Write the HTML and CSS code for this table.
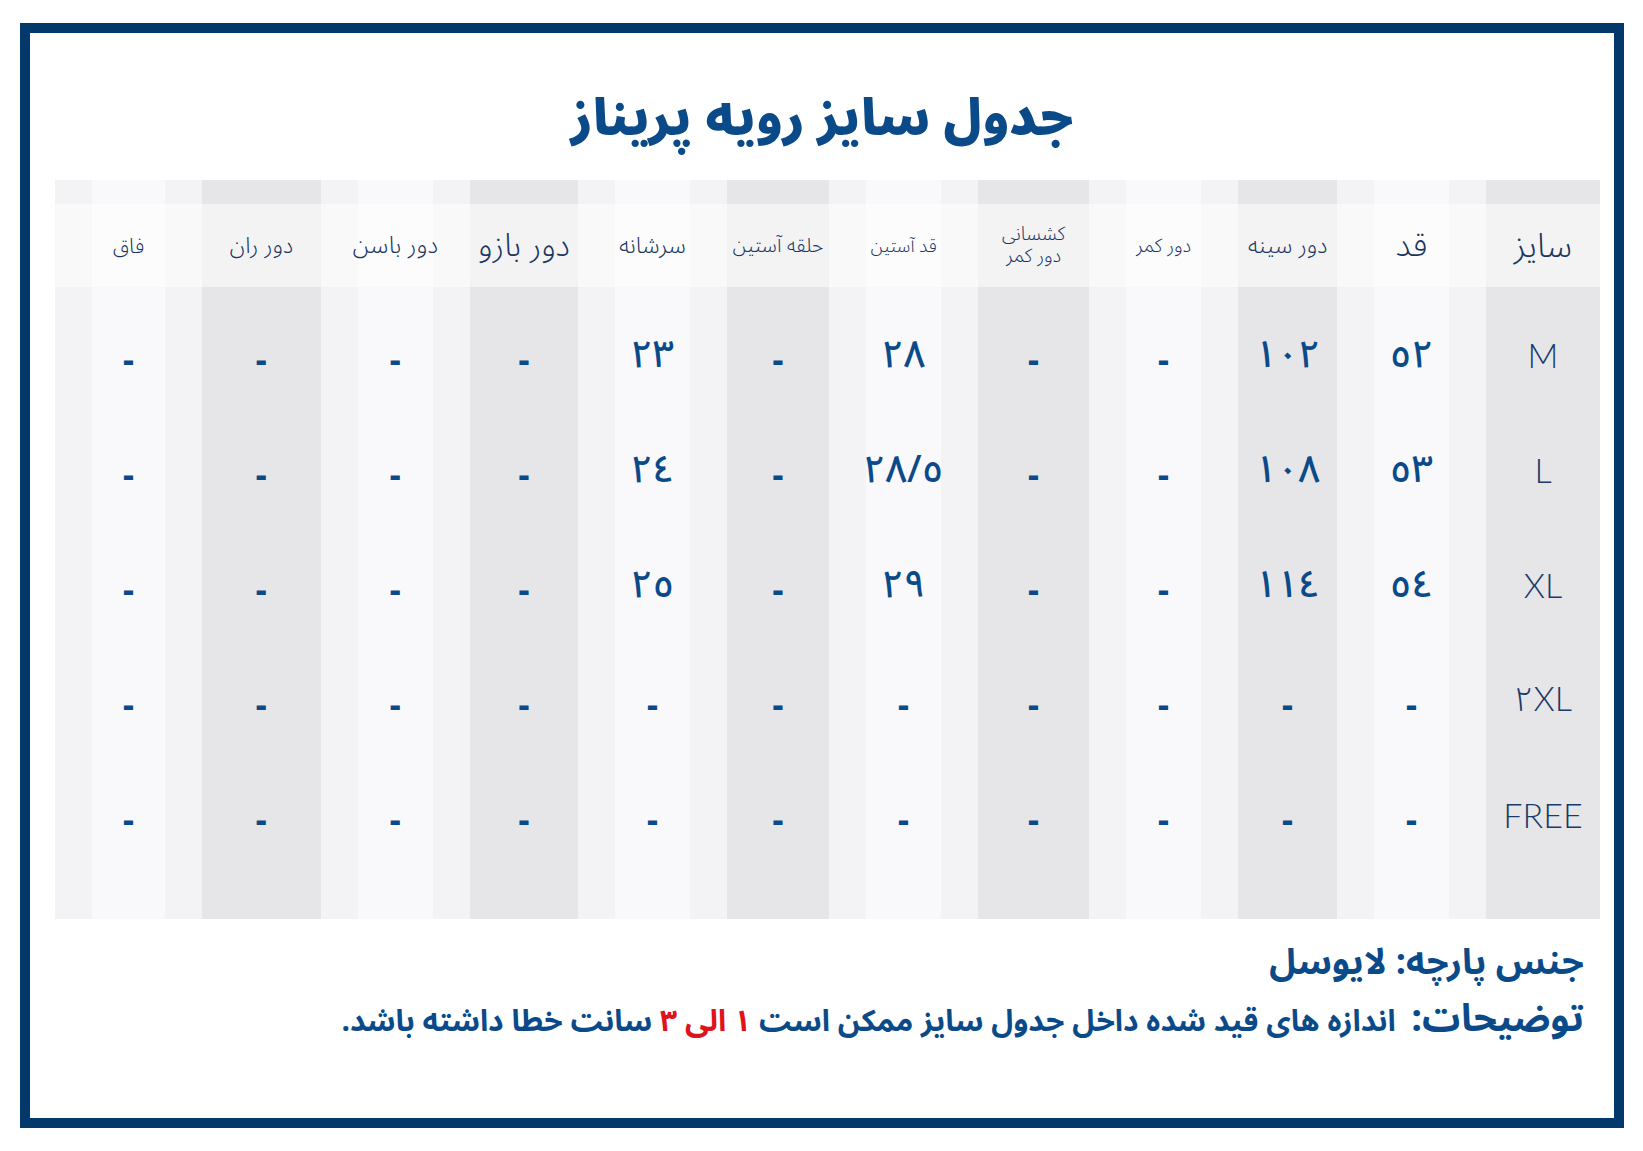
FILE: index.html
```html
<!DOCTYPE html>
<html lang="fa">
<head>
<meta charset="utf-8">
<title>جدول سایز رویه پریناز</title>
<link rel="stylesheet" href="styles.css">
</head>
<body>
<div class="frame" dir="rtl">
  <h1 class="title">جدول سایز رویه پریناز</h1>
  <div class="chart">
    <div class="col dark">
      <div class="hd fs-size">سایز</div>
      <div class="cell lat">M</div><div class="cell lat">L</div><div class="cell lat">XL</div><div class="cell lat">٢XL</div><div class="cell lat">FREE</div>
    </div>
    <div class="col light">
      <div class="hd fs-qad">قد</div>
      <div class="cell">٥٢</div><div class="cell">٥٣</div><div class="cell">٥٤</div><div class="cell d">-</div><div class="cell d">-</div>
    </div>
    <div class="col dark">
      <div class="hd fs23">دور سینه</div>
      <div class="cell">١٠٢</div><div class="cell">١٠٨</div><div class="cell">١١٤</div><div class="cell d">-</div><div class="cell d">-</div>
    </div>
    <div class="col light">
      <div class="hd fs19">دور کمر</div>
      <div class="cell d">-</div><div class="cell d">-</div><div class="cell d">-</div><div class="cell d">-</div><div class="cell d">-</div>
    </div>
    <div class="col dark">
      <div class="hd fs19 two">کشسانی<br>دور کمر</div>
      <div class="cell d">-</div><div class="cell d">-</div><div class="cell d">-</div><div class="cell d">-</div><div class="cell d">-</div>
    </div>
    <div class="col light">
      <div class="hd fs18">قد آستین</div>
      <div class="cell">٢٨</div><div class="cell">٢٨/٥</div><div class="cell">٢٩</div><div class="cell d">-</div><div class="cell d">-</div>
    </div>
    <div class="col dark">
      <div class="hd fs20">حلقه آستین</div>
      <div class="cell d">-</div><div class="cell d">-</div><div class="cell d">-</div><div class="cell d">-</div><div class="cell d">-</div>
    </div>
    <div class="col light">
      <div class="hd fs23">سرشانه</div>
      <div class="cell">٢٣</div><div class="cell">٢٤</div><div class="cell">٢٥</div><div class="cell d">-</div><div class="cell d">-</div>
    </div>
    <div class="col dark">
      <div class="hd fs32">دور بازو</div>
      <div class="cell d">-</div><div class="cell d">-</div><div class="cell d">-</div><div class="cell d">-</div><div class="cell d">-</div>
    </div>
    <div class="col light">
      <div class="hd fs24">دور باسن</div>
      <div class="cell d">-</div><div class="cell d">-</div><div class="cell d">-</div><div class="cell d">-</div><div class="cell d">-</div>
    </div>
    <div class="col dark">
      <div class="hd fs23">دور ران</div>
      <div class="cell d">-</div><div class="cell d">-</div><div class="cell d">-</div><div class="cell d">-</div><div class="cell d">-</div>
    </div>
    <div class="col light">
      <div class="hd fs21">فاق</div>
      <div class="cell d">-</div><div class="cell d">-</div><div class="cell d">-</div><div class="cell d">-</div><div class="cell d">-</div>
    </div>
  </div>
  <div class="notes">
    <p class="fabric">جنس پارچه: لایوسل</p>
    <p class="desc"><span class="lead">توضیحات:</span>&nbsp; اندازه های قید شده داخل جدول سایز ممکن است <span class="red">١</span> <span class="red">الی</span> <span class="red">٣</span> سانت خطا داشته باشد.</p>
  </div>
</div>
</body>
</html>
```
FILE: styles.css
```css
html, body {
  margin: 0;
  padding: 0;
  background: #ffffff;
}
body {
  font-family: "Noto Sans Arabic", "DejaVu Sans", sans-serif;
  color: #0b4a89;
}
.frame {
  margin: 23px 0 0 20px;
  width: 1604px;
  height: 1105px;
  border: 10px solid #03386a;
  box-sizing: border-box;
  display: flex;
  flex-direction: column;
}
.title {
  margin: 0;
  height: 147px;
  box-sizing: border-box;
  padding-top: 56px;
  line-height: 60px;
  font-size: 50px;
  font-weight: 900;
  text-align: center;
  color: #0b4a89;
}
.chart {
  margin: 0 14px 0 25px;
  display: grid;
  grid-template-columns: 114px 149px 99px 149px 111px 149px 102px 149px 108px 149.5px 118.5px 147px;
  height: 739px;
}
.col {
  display: flex;
  flex-direction: column;
  padding-top: 24px;
}
.col.dark {
  background: #e6e6e8;
}
.col.light {
  background: linear-gradient(to right, #f3f3f5 0, #f3f3f5 37px, #f9f9fb 37px, #f9f9fb calc(100% - 37px), #f3f3f5 calc(100% - 37px));
}
.hd {
  height: 83px;
  flex: none;
  display: flex;
  align-items: center;
  justify-content: center;
  text-align: center;
  background: rgba(255, 255, 255, 0.5);
  color: #1a3562;
  font-weight: 300;
  margin-bottom: 10px;
}
.two { line-height: 1.15; }
.fs-size { font-size: 34px; }
.fs-qad { font-size: 33px; }
.fs18 { font-size: 18px; }
.fs19 { font-size: 19px; }
.fs20 { font-size: 20px; }
.fs21 { font-size: 21px; }
.fs23 { font-size: 23px; }
.fs24 { font-size: 24px; }
.fs32 { font-size: 32px; }
.cell {
  height: 115px;
  flex: none;
  display: flex;
  align-items: center;
  justify-content: center;
  font-size: 38px;
  font-weight: 500;
  color: #0b4a89;
}
.cell.d {
  padding-top: 12px;
  box-sizing: border-box;
  font-weight: 800;
  font-size: 34px;
}
.cell.lat {
  font-family: "Lato", "Noto Sans Arabic", "Open Sans", sans-serif;
  font-weight: 300;
  font-size: 34px;
  color: #1a3a6c;
}
.notes {
  padding: 21px 30px 0 0;
  text-align: right;
}
.notes p {
  margin: 0;
  line-height: 46px;
  font-weight: 700;
  color: #0b4a89;
}
.fabric {
  font-size: 36px;
}
.desc {
  margin-top: 10px !important;
  font-size: 30px;
}
.lead {
  font-size: 38px;
}
.red {
  color: #e0131c;
}
```
